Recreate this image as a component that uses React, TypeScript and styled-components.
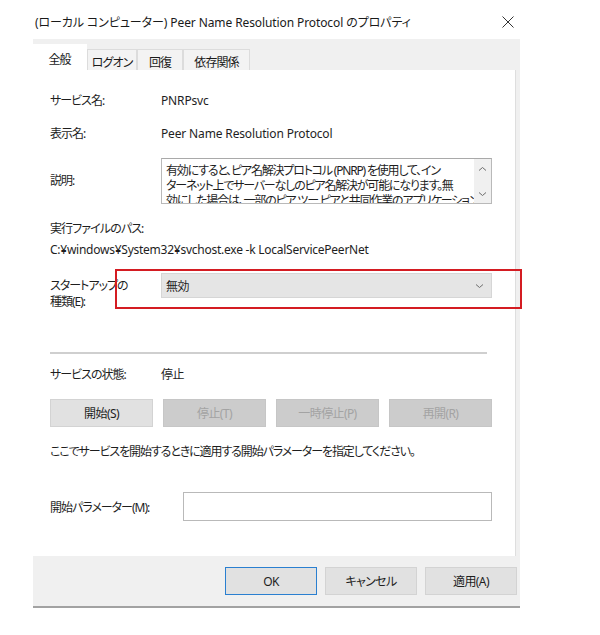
import React from "react";
import styled, { createGlobalStyle } from "styled-components";

const GlobalStyle = createGlobalStyle`
  html, body { margin: 0; padding: 0; background: #ffffff; }
  body {
    font-family: "Noto Sans", "Noto Sans CJK JP", sans-serif;
    font-size: 12px;
    color: #1e1e1e;
  }
`;

const Window = styled.div`
  width: 600px;
  height: 635px;
  background: #ffffff;
  display: flex;
  flex-direction: column;
`;

const TitleBar = styled.div`
  height: 39px;
  display: flex;
  align-items: center;
  padding: 5px 86px 0 35px;
  box-sizing: border-box;
`;

const Title = styled.div`
  flex: 1;
  font-size: 12px;
  color: #1a1a1a;
  font-feature-settings: "palt";
  letter-spacing: -0.1px;
  white-space: nowrap;
`;

const CloseIcon = styled.svg`
  width: 12px;
  height: 12px;
  margin-top: 0px;
`;

const Dialog = styled.div`
  margin-left: 33px;
  width: 487px;
  height: 567px;
  background: #f0f0f0;
  border-bottom: 2px solid #a2a2a2;
  display: flex;
  flex-direction: column;
`;

const TabStrip = styled.div`
  height: 31px;
  display: flex;
  align-items: flex-end;
`;

const Tab = styled.div<{ $active?: boolean; $w: number }>`
  width: ${(p) => p.$w}px;
  height: ${(p) => (p.$active ? 26 : 21)}px;
  box-sizing: border-box;
  display: flex;
  align-items: center;
  justify-content: center;
  background: ${(p) => (p.$active ? "#ffffff" : "#f3f3f3")};
  border: 1px solid ${(p) => (p.$active ? "#ffffff" : "#dcdcdc")};
  border-bottom: none;
  border-left: ${(p) => (p.$active ? "none" : "1px solid #dcdcdc")};
  font-size: 12px;
  color: #1a1a1a;
  font-feature-settings: "palt";
  letter-spacing: -0.9px;
  padding-top: 3px;
`;

const TabPanel = styled.div`
  width: 483px;
  height: 486px;
  box-sizing: border-box;
  background: #ffffff;
  border-right: 1px solid #dedede;
  padding: 0 23px 0 17px;
  display: flex;
  flex-direction: column;
`;

const Row = styled.div<{ $top: number; $col?: number; $align?: string }>`
  margin-top: ${(p) => p.$top}px;
  display: grid;
  grid-template-columns: ${(p) => p.$col ?? 111}px 1fr;
  align-items: ${(p) => p.$align ?? "center"};
  position: relative;
`;

const Label = styled.div<{ $pt?: number }>`
  line-height: 16px;
  color: #1e1e1e;
  font-feature-settings: "palt";
  letter-spacing: -1px;
  white-space: nowrap;
  padding-top: ${(p) => p.$pt ?? 0}px;
`;

const Value = styled.div<{ $ls?: number }>`
  line-height: 16px;
  color: #1e1e1e;
  font-feature-settings: "palt";
  letter-spacing: ${(p) => p.$ls ?? -0.15}px;
  white-space: nowrap;
`;

const TextLine = styled.div<{ $top: number; $ls: number }>`
  margin-top: ${(p) => p.$top}px;
  line-height: 16px;
  color: #1e1e1e;
  font-feature-settings: "palt";
  letter-spacing: ${(p) => p.$ls}px;
  white-space: nowrap;
`;

const DescBox = styled.div`
  height: 46px;
  box-sizing: border-box;
  border: 1px solid #b9b9b9;
  border-top-color: #a9a9a9;
  display: flex;
  overflow: hidden;
`;

const DescText = styled.div`
  flex: 1;
  min-width: 0;
  overflow: hidden;
  padding: 4px 0 0 4px;
  font-size: 12px;
  line-height: 15px;
  font-feature-settings: "palt";
  letter-spacing: -1.2px;
  white-space: nowrap;
  color: #1e1e1e;
`;

const ScrollBar = styled.div`
  width: 17px;
  flex-shrink: 0;
  background: #f0f0f0;
  display: flex;
  flex-direction: column;
  justify-content: space-between;
  align-items: center;
  padding: 7px 0 6px;
`;

const Chevron = styled.svg`
  width: 9px;
  height: 6px;
`;

const Select = styled.div`
  height: 25px;
  box-sizing: border-box;
  background: #e5e5e5;
  border: 1px solid #d6d6d6;
  display: flex;
  align-items: center;
  justify-content: space-between;
  padding: 0 7px 0 4px;
  color: #1e1e1e;
  letter-spacing: -0.5px;
`;

const Highlight = styled.div`
  position: absolute;
  left: 65px;
  top: -4px;
  width: 407px;
  height: 40px;
  box-sizing: border-box;
  border: 2px solid #d41c22;
  pointer-events: none;
`;

const Separator = styled.div`
  margin-top: 42px;
  height: 2px;
  width: 437px;
  background: #cfcfcf;
`;

const ButtonRow = styled.div`
  margin-top: 16px;
  display: flex;
  justify-content: space-between;
`;

const Button = styled.div<{ $disabled?: boolean; $w?: number; $primary?: boolean }>`
  width: ${(p) => p.$w ?? 103}px;
  height: 28px;
  box-sizing: border-box;
  display: flex;
  align-items: center;
  justify-content: center;
  background: ${(p) => (p.$disabled ? "#cccccc" : "#e1e1e1")};
  border: 1px solid ${(p) => (p.$primary ? "#2a7fd0" : p.$disabled ? "#c6c6c6" : "#d3d3d3")};
  color: ${(p) => (p.$disabled ? "#a3a3a3" : "#1e1e1e")};
  font-size: 12px;
  font-feature-settings: "palt";
  letter-spacing: -0.6px;
  white-space: nowrap;
`;

const Input = styled.div`
  height: 29px;
  box-sizing: border-box;
  border: 1px solid #b9b9b9;
  background: #ffffff;
`;

const Footer = styled.div`
  height: 48px;
  display: flex;
  justify-content: flex-end;
  align-items: flex-start;
  gap: 8px;
  padding: 11px 3px 0 0;
  box-sizing: border-box;
`;

const ChevronDown = () => (
  <Chevron viewBox="0 0 9 6">
    <path d="M1 1.5 L4.5 4.5 L8 1.5" fill="none" stroke="#6d6d6d" strokeWidth="1" />
  </Chevron>
);

const ChevronUp = () => (
  <Chevron viewBox="0 0 9 6">
    <path d="M1 4.5 L4.5 1.5 L8 4.5" fill="none" stroke="#6d6d6d" strokeWidth="1" />
  </Chevron>
);

export default function App() {
  return (
    <>
      <GlobalStyle />
      <Window>
        <TitleBar>
          <Title>(ローカル コンピューター) Peer Name Resolution Protocol のプロパティ</Title>
          <CloseIcon viewBox="0 0 12 12">
            <path d="M0.5 0.5 L11.5 11.5 M11.5 0.5 L0.5 11.5" stroke="#333" strokeWidth="1" fill="none" />
          </CloseIcon>
        </TitleBar>
        <Dialog>
          <TabStrip>
            <Tab $active $w={54}>全般</Tab>
            <Tab $w={50}>ログオン</Tab>
            <Tab $w={46}>回復</Tab>
            <Tab $w={67}>依存関係</Tab>
          </TabStrip>
          <TabPanel>
            <Row $top={23}>
              <Label>サービス名:</Label>
              <Value>PNRPsvc</Value>
            </Row>
            <Row $top={17}>
              <Label>表示名:</Label>
              <Value>Peer Name Resolution Protocol</Value>
            </Row>
            <Row $top={16}>
              <Label>説明:</Label>
              <DescBox>
                <DescText>
                  有効にすると、ピア名解決プロトコル (PNRP) を使用して、イン
                  <br />
                  ターネット上でサーバーなしのピア名解決が可能になります。無
                  <br />
                  効にした場合は、一部のピア ツー ピアと共同作業のアプリケーション
                </DescText>
                <ScrollBar>
                  <ChevronUp />
                  <ChevronDown />
                </ScrollBar>
              </DescBox>
            </Row>
            <TextLine $top={17} $ls={-0.9}>実行ファイルのパス:</TextLine>
            <TextLine $top={5} $ls={-0.25}>C:¥windows¥System32¥svchost.exe -k LocalServicePeerNet</TextLine>
            <Row $top={15} $align="start">
              <Label $pt={5}>
                スタートアップの
                <br />
                種類(E):
              </Label>
              <Select>
                <span>無効</span>
                <ChevronDown />
              </Select>
              <Highlight />
            </Row>
            <Separator />
            <Row $top={13}>
              <Label>サービスの状態:</Label>
              <Value $ls={-0.5}>停止</Value>
            </Row>
            <ButtonRow>
              <Button>開始(S)</Button>
              <Button $disabled>停止(T)</Button>
              <Button $disabled>一時停止(P)</Button>
              <Button $disabled>再開(R)</Button>
            </ButtonRow>
            <TextLine $top={17} $ls={-1.1}>
              ここでサービスを開始するときに適用する開始パラメーターを指定してください。
            </TextLine>
            <Row $top={32} $col={133}>
              <Label $pt={3}>開始パラメーター(M):</Label>
              <Input />
            </Row>
          </TabPanel>
          <Footer>
            <Button $primary $w={92}>OK</Button>
            <Button $w={92}>キャンセル</Button>
            <Button $w={92}>適用(A)</Button>
          </Footer>
        </Dialog>
      </Window>
    </>
  );
}
